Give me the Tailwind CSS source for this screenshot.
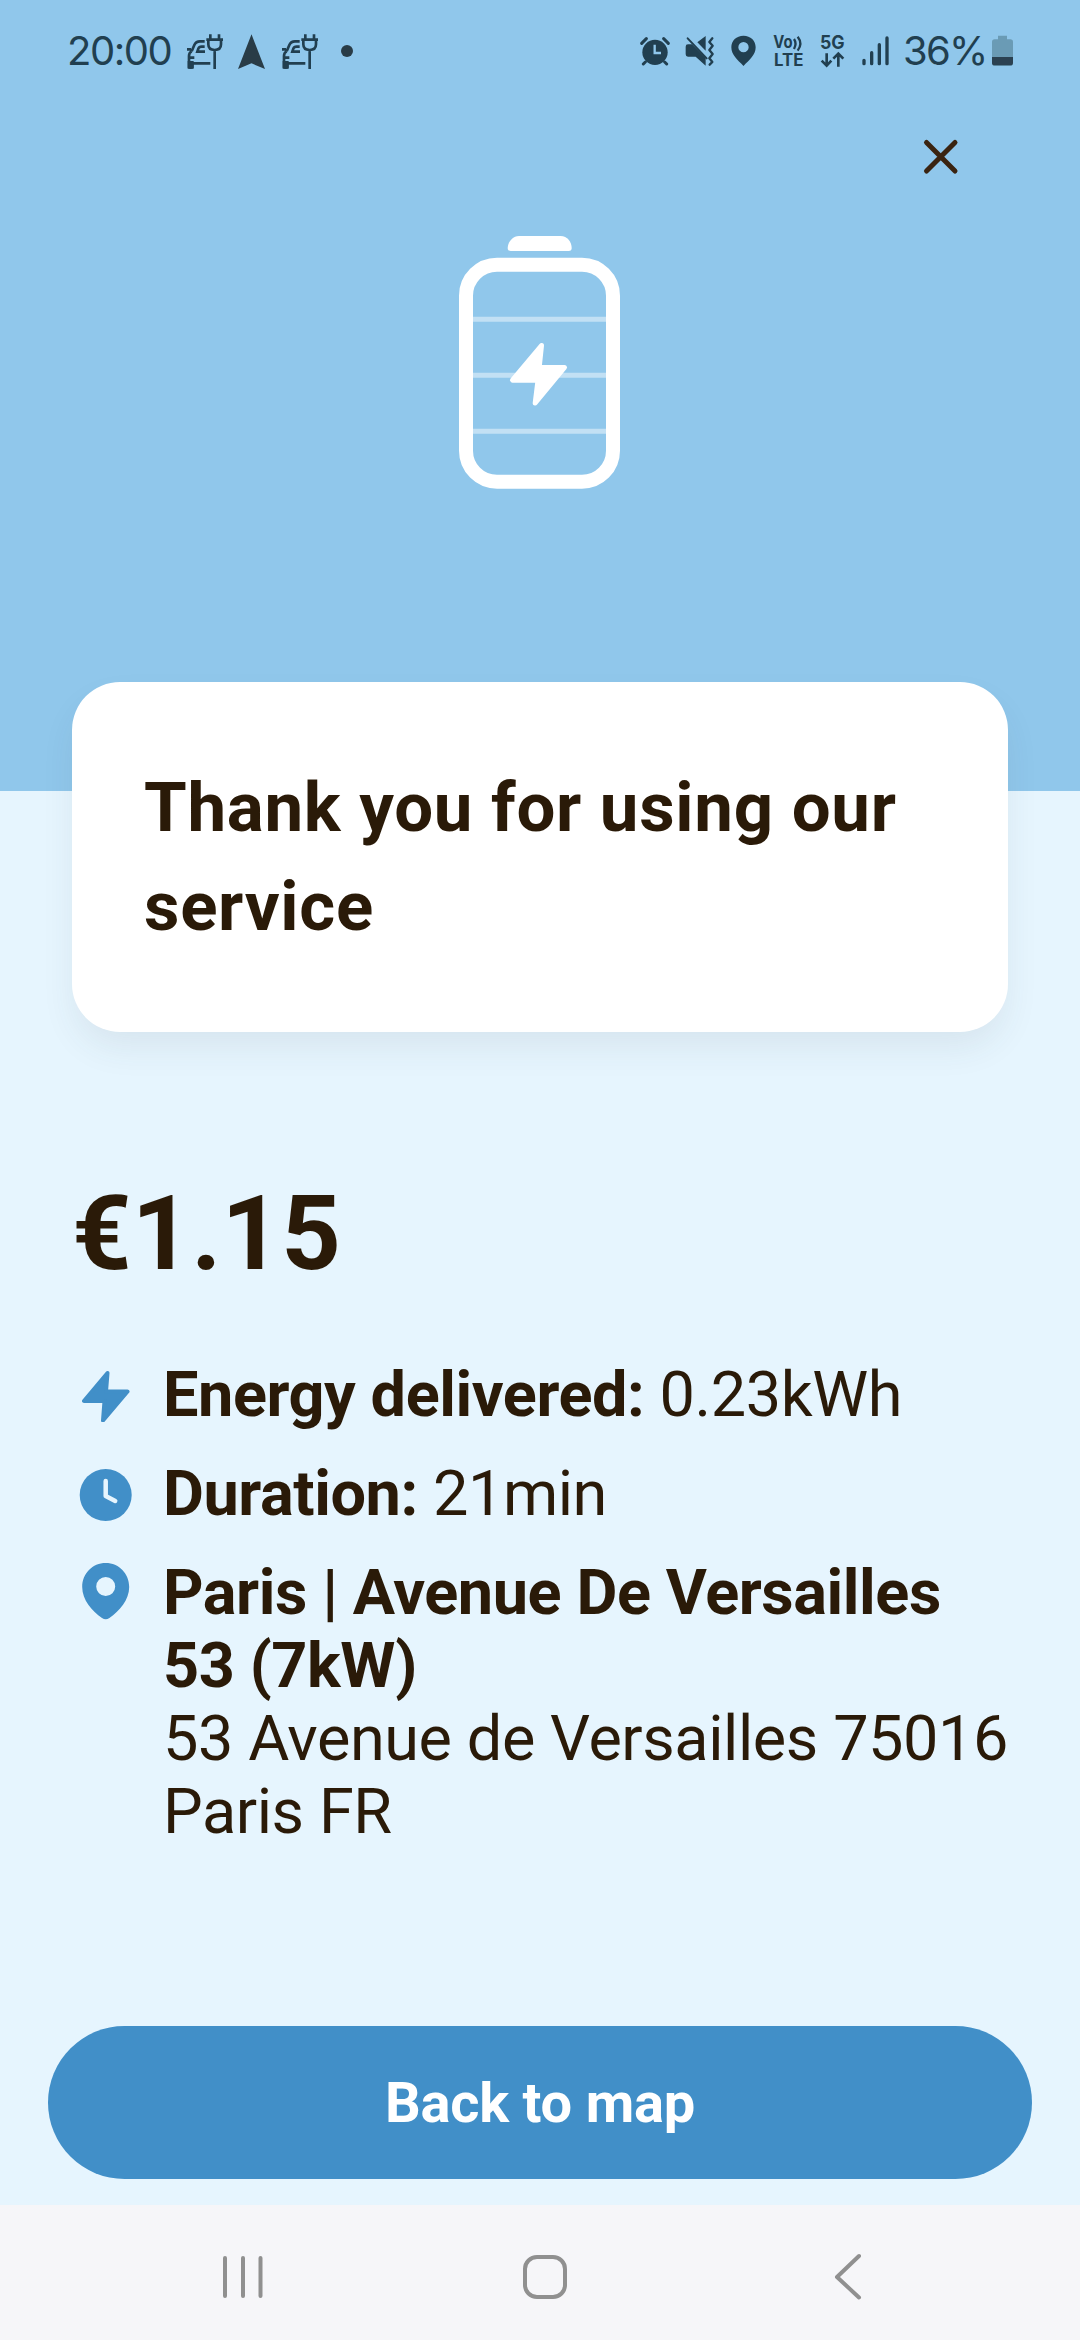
<!DOCTYPE html>
<html lang="en">

<head>
    <meta charset="UTF-8">
    <meta name="viewport" content="width=device-width, initial-scale=1.0">
    <title>Charging summary</title>
    <script src="https://cdn.jsdelivr.net/npm/@tailwindcss/browser@4"></script>
</head>

<body class="bg-[#e6f5fe] font-['Roboto',sans-serif] text-[#2a1a08]">
    <div class="flex h-[2340px] w-[1080px] flex-col overflow-hidden">

        <!-- Header -->
        <header class="h-[791px] shrink-0 bg-[#90c7eb]">

            <!-- Status bar -->
            <div class="flex h-[102px] items-center justify-between pr-[67px] pl-[67px] font-['Inter',sans-serif] text-[#213f50]">
                <div class="flex items-center">
                    <span class="w-[119px] text-[40px] leading-none tracking-[-1.5px]">20:00</span>
                    <svg class="h-[40px] w-[37px]" viewBox="0 0 111 120" fill="none" stroke="currentColor" stroke-width="8">
                        <path d="M73 10v14M99 10v14M61 26h50M67 26v14q0 17 19 17t19-17V26M86 57v57M56 31H42q-12 0-17 11l-8 19M3 55h12M56 47H47q-8 0-10 6l-3 9h23M17 61q-8 4-8 14v34h10v-12h54M12 80h13" />
                        <path d="M5 90h18v20q-9 8-18 0z" fill="currentColor" stroke="none" />
                    </svg>
                    <svg class="ml-[15px] h-[40px] w-[27px]" viewBox="0 0 81 120" fill="#293c47">
                        <path d="M40.500 10L81 114 40.500 97 0 114z" />
                    </svg>
                    <svg class="ml-4 h-[40px] w-[37px]" viewBox="0 0 111 120" fill="none" stroke="currentColor" stroke-width="8">
                        <path d="M73 10v14M99 10v14M61 26h50M67 26v14q0 17 19 17t19-17V26M86 57v57M56 31H42q-12 0-17 11l-8 19M3 55h12M56 47H47q-8 0-10 6l-3 9h23M17 61q-8 4-8 14v34h10v-12h54M12 80h13" />
                        <path d="M5 90h18v20q-9 8-18 0z" fill="currentColor" stroke="none" />
                    </svg>
                    <span class="ml-[23px] size-3 rounded-full bg-[#293c47]"></span>
                </div>
                <div class="flex items-center">
                    <!-- alarm -->
                    <svg class="h-[40px] w-[30px]" viewBox="0 0 90 120" fill="currentColor">
                        <circle cx="45" cy="64" r="38" />
                        <path d="M5 37l14-14M85 37L71 23M16 93l-6 6M74 93l6 6" stroke="currentColor" stroke-width="9" stroke-linecap="round" />
                        <path d="M44 41v25h19" fill="none" stroke="#90c7eb" stroke-width="7" />
                    </svg>
                    <!-- vibrate -->
                    <svg class="ml-[15px] h-[40px] w-[30px]" viewBox="0 0 90 120" fill="currentColor">
                        <path d="M2 47q0-7 7-7h12l41 41v23L32 77H9q-7 0-7-7zM37 34l25-19v44z" />
                        <path d="M8 22l57 60" fill="none" stroke="currentColor" stroke-width="6" stroke-linecap="round" />
                        <path d="M82 22l-9 11 10 11-10 13 10 12-10 13 9 11-8 8" fill="none" stroke="currentColor" stroke-width="7" stroke-linecap="round" stroke-linejoin="round" />
                    </svg>
                    <!-- location -->
                    <svg class="ml-4 h-[40px] w-[25px]" viewBox="0 0 75 120" fill="currentColor">
                        <path fill-rule="evenodd" d="M37.500 14C16 14 1 29 1 49c0 23 18 37 36.500 56C56 86 74 72 74 49 74 29 59 14 37.500 14zm0 19a15.500 15.500 0 1 1 0 31 15.500 15.500 0 0 1 0-31z" />
                    </svg>
                    <!-- volte -->
                    <svg class="ml-[17px] h-[40px] w-[32px]" viewBox="0 0 96 120" fill="currentColor">
                        <text x="1" y="52" font-size="50" font-weight="700" textLength="58" lengthAdjust="spacingAndGlyphs">Vo</text>
                        <text x="3" y="104" font-size="50" font-weight="700" textLength="88" lengthAdjust="spacingAndGlyphs">LTE</text>
                        <path d="M63 24q9 13 0 30M74 17q16 20 0 42" fill="none" stroke="currentColor" stroke-width="7" />
                    </svg>
                    <!-- 5g -->
                    <svg class="ml-[15px] h-[40px] w-[25px]" viewBox="0 0 75 120" fill="currentColor">
                        <text x="0" y="53" font-size="56" font-weight="700" textLength="74" lengthAdjust="spacingAndGlyphs">5G</text>
                        <path d="M20 67v36M5 89l15 15 14-15M55 107V69M40 83l15-15 15 15" fill="none" stroke="currentColor" stroke-width="8" />
                    </svg>
                    <!-- signal -->
                    <svg class="ml-[17px] h-[40px] w-[28px]" viewBox="0 0 84 120" fill="none" stroke="currentColor" stroke-width="10" stroke-linecap="round">
                        <path d="M6 88v10M29 65v33M52 41v57M75 21v77" />
                    </svg>
                    <span class="ml-[13px] w-[90px] text-[40px] leading-none tracking-[-1.7px]">36%</span>
                    <svg class="-ml-px h-[40px] w-[21px]" viewBox="0 0 63 120">
                        <path d="M18 14h27v11h10q8 0 8 8v64q0 8-8 8H8q-8 0-8-8V33q0-8 8-8h10z" fill="#6a9bb5" />
                        <path d="M0 78h63v17q0 8-8 8H8q-8 0-8-8z" fill="#2b4151" />
                    </svg>
                </div>
            </div>

            <!-- Close -->
            <div class="flex justify-end pr-[116px]">
                <button class="mt-[31px] size-12" aria-label="Close">
                    <svg class="size-12" viewBox="0 0 48 48" fill="none" stroke="#3a2411" stroke-width="5" stroke-linecap="round">
                        <path d="M10.500 9.500l28.500 28.500M39 9.500L10.500 38" />
                    </svg>
                </button>
            </div>

            <!-- Battery -->
            <svg class="mx-auto mt-[54px] h-[256px] w-[164px]" viewBox="0 0 164 256" fill="white">
                <path d="M61 1h41.500c7 0 11 6 11.200 12 0 2-1 3-3 3H52.700c-2 0-3-1-3-3C50 7 54.500 1 61 1z" />
                <path d="M15 84.300h133M15 140.300h133M15 196.300h133" stroke="white" stroke-opacity=".45" stroke-width="5" />
                <rect x="8" y="29.700" width="147" height="217" rx="31" fill="none" stroke="white" stroke-width="14" />
                <path d="M83.500 110.500L54.500 145.200H80L77.200 168L106.500 132.500H81.200z" stroke="white" stroke-width="5" stroke-linejoin="round" />
            </svg>
        </header>

        <!-- Thank you card -->
        <section class="relative mx-[72px] -mt-[109px] h-[350px] shrink-0 rounded-[48px] bg-white px-[72px] py-[76px] shadow-[0_18px_36px_-4px_rgba(60,70,80,0.09)]">
            <h1 class="text-[69px] leading-[99px] font-bold tracking-[0.7px]">Thank you for using our service</h1>
        </section>

        <!-- Session details -->
        <main class="mt-[140px] flex-1 pr-[60px] pl-[72px]">
            <p class="text-[104px] leading-[123px] font-bold">€1.15</p>
            <ul class="mt-[63px] flex flex-col gap-[26px] text-[63px] leading-[73px] tracking-[-0.43px]">
                <li class="flex">
                    <svg class="mt-3 mr-[25px] ml-[6px] h-[52px] w-[60px] shrink-0" viewBox="0 0 60 52" fill="#418fc8" stroke="#418fc8" stroke-width="4" stroke-linejoin="round">
                        <path d="M29.500 3L6 31H26.500L25 50.500L49.500 21.500H28z" />
                    </svg>
                    <p><b>Energy delivered:</b> 0.23kWh</p>
                </li>
                <li class="flex">
                    <svg class="mt-3 mr-[25px] ml-[6px] h-[52px] w-[60px] shrink-0" viewBox="0 0 60 52" fill="none">
                        <circle cx="27.700" cy="26" r="26" fill="#418fc8" />
                        <path d="M27.700 12v15l9.500 5" stroke="#e6f5fe" stroke-width="4.500" stroke-linecap="round" stroke-linejoin="round" />
                    </svg>
                    <p><b>Duration:</b> 21min</p>
                </li>
                <li class="flex">
                    <svg class="mt-[7px] mr-[25px] ml-[6px] h-[57px] w-[60px] shrink-0" viewBox="0 0 60 57" fill="#418fc8">
                        <path fill-rule="evenodd" d="M27.700 0C14.500 0 4.200 10.500 4.200 24c0 13 9.800 24 19.800 31q3.700 2.500 7.400 0c10-7 19.800-18 19.800-31C51.200 10.500 41 0 27.700 0zm0 14a9.500 9.500 0 1 1 0 19 9.500 9.500 0 0 1 0-19z" />
                    </svg>
                    <p class="whitespace-nowrap"><b>Paris | Avenue De Versailles<br>53 (7kW)</b><br>53 Avenue de Versailles 75016<br>Paris FR</p>
                </li>
            </ul>
        </main>

        <div class="shrink-0 px-12 pb-[26px]">
            <button class="h-[153px] w-full rounded-full bg-[#418fc8] text-[56px] font-bold tracking-[-0.2px] text-white">Back to map</button>
        </div>

        <!-- Navigation bar -->
        <nav class="h-[135px] shrink-0 bg-[#f6f6f9]">
            <svg class="h-[135px] w-full" viewBox="0 0 1080 135" fill="none" stroke="#909090" stroke-width="4" stroke-linecap="round" stroke-linejoin="round">
                <path d="M225 53v38M243 53v38M260.500 53v38M859 51l-22 21 22 20.500" />
                <rect x="525" y="52" width="40" height="40" rx="12" />
            </svg>
        </nav>
    </div>
</body>

</html>
